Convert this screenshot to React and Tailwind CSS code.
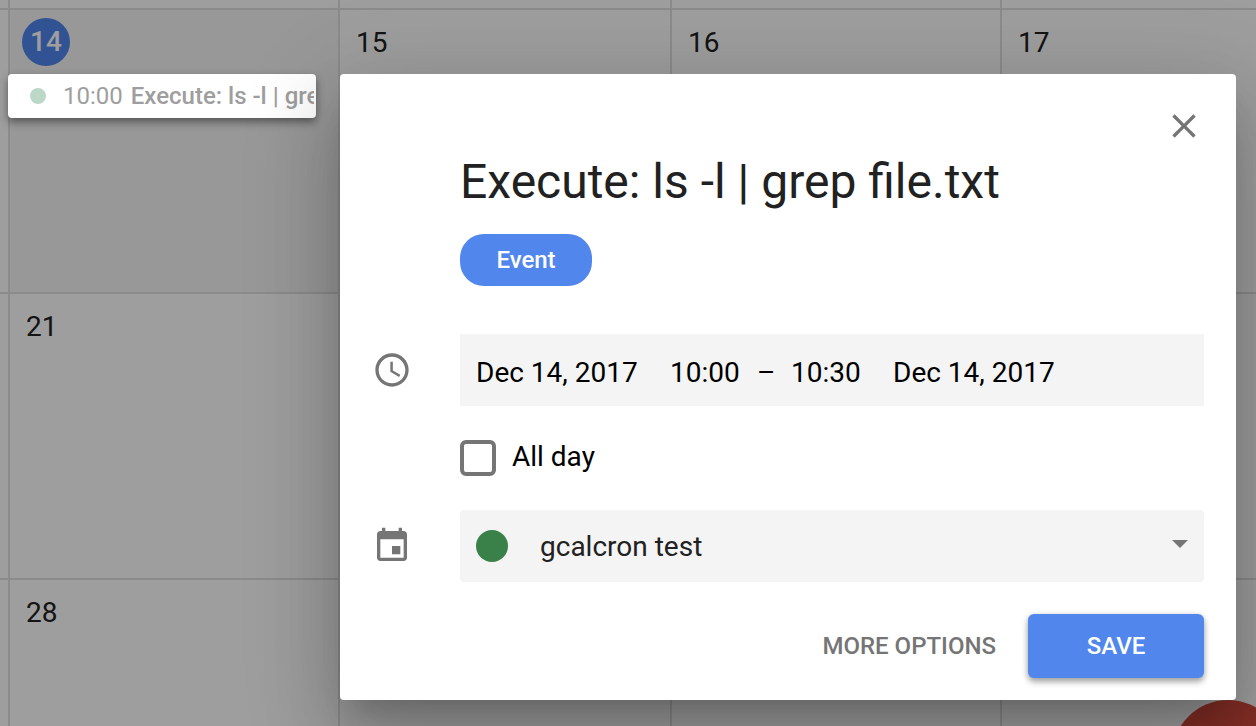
import React from "react";

function DayCell({ day, today = false, last = false, children }) {
  return (
    <div
      className={
        today
          ? "min-w-0 border-r-2 border-b-2 border-[#e0e0e0] bg-[#f5f5f5]"
          : last
            ? "min-w-0 border-b-2 border-[#e0e0e0]"
            : "min-w-0 border-r-2 border-b-2 border-[#e0e0e0]"
      }
    >
      {today ? (
        <div className="px-3 pt-2">
          <span className="flex size-12 items-center justify-center rounded-full bg-[#5186ed] font-medium text-white">
            {day}
          </span>
        </div>
      ) : (
        day && <div className="px-4 pt-[17px]">{day}</div>
      )}
      {children}
    </div>
  );
}

function EventChip() {
  return (
    <div className="relative z-10 mt-2 mr-[22px] -ml-0.5 flex h-11 items-center overflow-hidden rounded bg-white pr-0.5 pl-[22px] text-2xl whitespace-nowrap text-[#9e9e9e] shadow-[0_4px_8px_rgba(0,0,0,0.45)]">
      <span className="mr-[17px] size-4 shrink-0 rounded-full bg-[#bbd8c8]" />
      <span className="mr-2">10:00</span>
      <span className="min-w-0 overflow-hidden font-medium">Execute: ls -l | grep file.txt</span>
    </div>
  );
}

function Calendar() {
  return (
    <div className="grid h-screen grid-cols-[10px_330px_332px_330px_1fr] grid-rows-[10px_284px_286px_286px] overflow-hidden bg-white text-[28px] leading-8 text-[#212121]">
      <DayCell />
      <DayCell />
      <DayCell />
      <DayCell />
      <DayCell last />

      <DayCell />
      <DayCell day="14" today>
        <EventChip />
      </DayCell>
      <DayCell day="15" />
      <DayCell day="16" />
      <DayCell day="17" last />

      <DayCell />
      <DayCell day="21" />
      <DayCell day="22" />
      <DayCell day="23" />
      <DayCell last />

      <DayCell />
      <DayCell day="28" />
      <DayCell day="29" />
      <DayCell day="30" />
      <DayCell last />
    </div>
  );
}

function Icon({ d }) {
  return (
    <svg viewBox="0 0 24 24" className="size-10 fill-[#757575]" aria-hidden="true">
      <path d={d} />
    </svg>
  );
}

const CLOSE =
  "M19 6.41L17.59 5 12 10.59 6.41 5 5 6.41 10.59 12 5 17.59 6.41 19 12 13.41 17.59 19 19 17.59 13.41 12z";
const CLOCK =
  "M11.99 2C6.47 2 2 6.48 2 12s4.47 10 9.99 10C17.52 22 22 17.52 22 12S17.52 2 11.99 2zM12 20c-4.42 0-8-3.58-8-8s3.58-8 8-8 8 3.58 8 8-3.58 8-8 8zm.5-13H11v6l5.25 3.15.75-1.23-4.5-2.67z";
const EVENT =
  "M17 12h-5v5h5v-5zM16 1v2H8V1H6v2H5c-1.11 0-1.99.9-1.99 2L3 19c0 1.1.89 2 2 2h14c1.1 0 2-.9 2-2V5c0-1.1-.9-2-2-2h-1V1h-2zm3 18H5V8h14v11z";

function EventDialog() {
  return (
    <form
      role="dialog"
      aria-labelledby="event-title"
      onSubmit={(e) => e.preventDefault()}
      className="rounded bg-white pt-8 pr-8 pb-[22px] pl-8 text-[28px] leading-8 text-black shadow-[0_22px_30px_-14px_rgba(0,0,0,0.2),0_48px_76px_6px_rgba(0,0,0,0.14),0_18px_92px_16px_rgba(0,0,0,0.12)]"
    >
      <div className="flex justify-end">
        <button type="button" aria-label="Close" className="size-10">
          <Icon d={CLOSE} />
        </button>
      </div>

      <div className="grid grid-cols-[88px_minmax(0,1fr)]">
        <div className="col-start-2">
          <h1 id="event-title" className="mt-2 text-5xl leading-14 text-[#212121]">
            Execute: ls -l | grep file.txt
          </h1>
          <button
            type="button"
            className="mt-6 flex h-[52px] w-[132px] items-center justify-center rounded-3xl bg-[#5186ed] text-2xl font-medium text-white"
          >
            Event
          </button>
        </div>

        <div className="mt-12 flex h-18 items-center">
          <Icon d={CLOCK} />
        </div>
        <div className="mt-12 flex h-18 items-center bg-[#f4f4f4] pt-1.5 pl-4">
          <input aria-label="Start date" defaultValue="Dec 14, 2017" className="w-[194px] bg-transparent outline-none" />
          <input aria-label="Start time" defaultValue="10:00" className="w-[87px] bg-transparent outline-none" />
          <span className="w-[34px]">–</span>
          <input aria-label="End time" defaultValue="10:30" className="w-[102px] bg-transparent outline-none" />
          <input aria-label="End date" defaultValue="Dec 14, 2017" className="w-[194px] bg-transparent outline-none" />
        </div>

        <label className="col-start-2 mt-[34px] flex h-9 items-start gap-4">
          <input
            type="checkbox"
            className="size-9 appearance-none rounded-md border-4 border-[#757575] bg-white checked:bg-[#5186ed]"
          />
          <span className="pt-px">All day</span>
        </label>

        <div className="mt-[34px] flex h-18 items-center">
          <Icon d={EVENT} />
        </div>
        <div className="relative mt-[34px] h-18">
          <select
            aria-label="Calendar"
            className="size-full appearance-none rounded bg-[#f4f4f4] pt-0.5 pr-14 pl-20 text-[#212121] outline-none"
          >
            <option>gcalcron test</option>
          </select>
          <span className="pointer-events-none absolute inset-0 flex items-center justify-between pr-4 pl-4">
            <span className="size-8 rounded-full bg-[#3a8049]" />
            <svg viewBox="0 0 16 12" className="h-3 w-4 fill-[#757575]" aria-hidden="true">
              <path d="M0 0h16L8 8z" />
            </svg>
          </span>
        </div>
      </div>

      <div className="mt-8 flex items-center justify-end gap-4 text-2xl font-medium">
        <button type="button" className="h-16 px-4 text-[#757575]">
          MORE OPTIONS
        </button>
        <button
          type="submit"
          className="h-16 w-44 rounded-md bg-[#5186ed] text-white shadow-[0_4px_6px_rgba(0,0,0,0.3),0_1px_6px_rgba(0,0,0,0.15)]"
        >
          SAVE
        </button>
      </div>
    </form>
  );
}

export default function App() {
  return (
    <main className="relative min-h-screen overflow-hidden font-[Roboto,sans-serif]">
      <Calendar />
      <button
        type="button"
        aria-label="Create event"
        className="absolute -right-7 -bottom-[86px] size-28 rounded-full bg-[#d64b3e]"
      />
      <div className="absolute inset-0 bg-black/38" />
      <div className="absolute inset-x-0 top-0 z-20 pt-[74px] pr-5 pl-[340px]">
        <EventDialog />
      </div>
    </main>
  );
}
